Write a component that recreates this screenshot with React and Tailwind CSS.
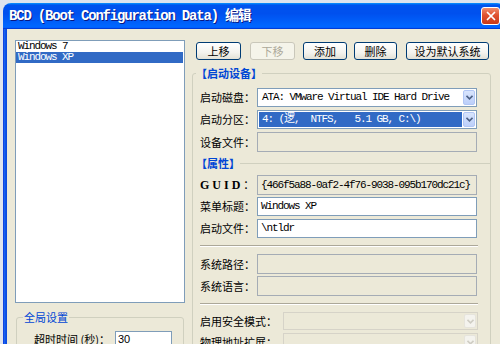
import { X } from "lucide-react";

const mono = { fontFamily: '"Liberation Mono", "Noto Sans CJK SC", monospace' };
const cjk = { fontFamily: 'Tahoma, "Noto Sans CJK SC", sans-serif' };

const XPButton = ({ label, w, disabled, className = "" }) => (
  <div
    className={`h-[18px] ${w} flex items-center justify-center rounded-[3px] border text-[11px] leading-none ${
      disabled
        ? "border-[#c9c7ba] text-[#aca899] bg-[#f5f4ea]"
        : "border-[#003c74] text-black bg-[linear-gradient(180deg,#ffffff,#f4f3ee_60%,#e3e1d6)]"
    } ${className}`}
    style={cjk}
  >
    {label}
  </div>
);

const Arrow = ({ disabled }) => (
  <div
    className={`w-[12px] h-full flex items-center justify-center rounded-[2px] ${
      disabled
        ? "bg-[#f4f3ee] border border-[#e6e4dc]"
        : "bg-[linear-gradient(180deg,#d9e5fd,#bccffa)] border border-[#b1c6f5]"
    }`}
  >
    <svg width="7" height="5" viewBox="0 0 7 5">
      <path d="M0.5 0.8 L3.5 3.8 L6.5 0.8" fill="none" stroke={disabled ? "#cfcdc4" : "#4d6185"} strokeWidth="1.6" />
    </svg>
  </div>
);

const Label = ({ children, w = "w-[57px]" }) => (
  <div className={`${w} shrink-0 text-[11px] text-black leading-none`} style={cjk}>
    {children}
  </div>
);

const Combo = ({ value, selected, h = "h-[19px]" }) => (
  <div className={`w-[220px] ${h} border border-[#7f9db9] bg-white flex items-stretch p-[1px] gap-[1px]`}>
    <div
      className={`flex-1 flex items-center pl-[3px] text-[11px] tracking-[-1.1px] whitespace-pre ${
        selected ? "bg-[#316ac5] text-white" : "text-black"
      }`}
      style={mono}
    >
      {value}
    </div>
    <Arrow />
  </div>
);

const Field = ({ value, disabled, h = "h-[19px]" }) => (
  <div
    className={`w-[220px] ${h} border flex items-center pl-[3px] text-[11px] tracking-[-1.1px] whitespace-pre text-black ${
      disabled ? "border-[#a5acb5] bg-[#ece9d8]" : "border-[#7f9db9] bg-white"
    }`}
    style={mono}
  >
    {value}
  </div>
);

const Separator = () => <div className="w-[278px] border-t border-[#aca899] border-b border-b-white" />;

export default function App() {
  return (
    <div className="w-[500px] h-[344px] overflow-hidden bg-[#dfe4ee] pl-[3px] pt-[3px]">
      <div className="w-[502px] h-[400px] flex flex-col">
        {/* Title bar */}
        <div className="h-[26px] shrink-0 rounded-tl-[8px] rounded-tr-[8px] flex items-center justify-between bg-[linear-gradient(180deg,#0997ff_0%,#0053ee_8%,#0050ee_40%,#0066ff_88%,#0066ff_93%,#005bff_95%,#003dd7_96%,#003dd7_100%)]">
          <div
            className="pl-[6px] text-white font-bold text-[14px] tracking-[-1.2px] [text-shadow:1px_1px_#0a1883]"
            style={mono}
          >
            BCD (Boot Configuration Data) 编辑
          </div>
          <div className="mr-[5px] w-[19px] h-[18px] rounded-[3px] border border-white bg-[linear-gradient(180deg,#f08c6c,#e0512f_45%,#c8391a)] flex items-center justify-center">
            <X size={14} strokeWidth={3} color="white" />
          </div>
        </div>

        <div className="flex flex-1">
          {/* left frame */}
          <div className="w-[4px] shrink-0 bg-[linear-gradient(90deg,#0831d9,#1a64f0,#0b50e6,#0a46dc)]" />
          <div className="flex-1 bg-[#ece9d8] flex items-start pl-[8px] pt-[11px]">
            {/* Left column */}
            <div className="w-[170px] flex flex-col shrink-0">
              <div className="h-[263px] border border-[#7f9db9] bg-white flex flex-col text-[11px] tracking-[-1.1px]" style={mono}>
                <div className="h-[11px] leading-[11px] pl-[2px] text-black">Windows 7</div>
                <div className="h-[11px] leading-[11px] pl-[2px] mr-[1px] bg-[#316ac5] text-white">Windows XP</div>
              </div>
              <div className="mt-[14px] ml-[1px] w-[168px] h-[60px] border border-[#d0d0bf] rounded-[3px]">
                <div
                  className="-mt-[7px] ml-[6px] w-fit px-[1px] h-[13px] leading-[13px] bg-[#ece9d8] text-[11px] text-[#0046d5]"
                  style={cjk}
                >
                  全局设置
                </div>
                <div className="mt-[7px] flex items-center pl-[17px]">
                  <div className="w-[81px] text-[11px] leading-none" style={cjk}>超时时间 (秒)：</div>
                  <div
                    className="w-[57px] h-[17px] border border-[#7f9db9] bg-white pl-[2px] text-[11px] flex items-center"
                    style={{ fontFamily: '"Liberation Sans", sans-serif' }}
                  >
                    30
                  </div>
                </div>
              </div>
            </div>

            {/* Right column */}
            <div className="ml-[7px] w-[299px] flex flex-col shrink-0">
              <div className="mt-[2px] pl-[4px] flex">
                <XPButton label="上移" w="w-[45px]" />
                <XPButton label="下移" w="w-[45px]" disabled className="ml-[9px]" />
                <XPButton label="添加" w="w-[44px]" className="ml-[8px]" />
                <XPButton label="删除" w="w-[43px]" className="ml-[7px]" />
                <XPButton label="设为默认系统" w="w-[83px]" className="ml-[9px]" />
              </div>

              <div className="mt-[13px] h-[300px] border border-[#d0d0bf] rounded-[3px]">
                <div
                  className="-mt-[7px] ml-[3px] w-fit h-[13px] leading-[13px] bg-[#ece9d8] text-[11px] font-bold text-[#0046d5]"
                  style={cjk}
                >
                  【启动设备】
                </div>
                <div className="px-[7px] flex flex-col">
                  <div className="mt-[8px] flex items-center">
                    <Label>启动磁盘：</Label>
                    <Combo value="ATA: VMware Virtual IDE Hard Drive" />
                  </div>
                  <div className="mt-[3px] flex items-center">
                    <Label>启动分区：</Label>
                    <Combo value="4: (逻,  NTFS,   5.1 GB, C:\)" selected />
                  </div>
                  <div className="mt-[3px] flex items-center">
                    <Label>设备文件：</Label>
                    <Field value="" disabled h="h-[20px]" />
                  </div>

                  <div className="mt-[5px] -ml-[4px] -mr-[7px] h-[13px] flex items-center">
                    <div className="text-[11px] font-bold text-[#0046d5] leading-none" style={cjk}>【属性】</div>
                    <div className="flex-1 border-t border-[#d0d0bf]" />
                  </div>

                  <div className="mt-[5px] flex items-center">
                    <Label>
                      <span
                        className="font-bold text-[12px] tracking-[3px]"
                        style={{ fontFamily: '"Liberation Serif", serif' }}
                      >
                        GUID
                      </span>
                      ：
                    </Label>
                    <Field value="{466f5a88-0af2-4f76-9038-095b170dc21c}" disabled h="h-[20px]" />
                  </div>
                  <div className="mt-[2px] flex items-center">
                    <Label>菜单标题：</Label>
                    <Field value="Windows XP" />
                  </div>
                  <div className="mt-[3px] flex items-center">
                    <Label>启动文件：</Label>
                    <Field value="\ntldr" />
                  </div>

                  <div className="mt-[7px]">
                    <Separator />
                  </div>

                  <div className="mt-[7px] flex items-center">
                    <Label>系统路径：</Label>
                    <Field value="" disabled h="h-[20px]" />
                  </div>
                  <div className="mt-[2px] flex items-center">
                    <Label>系统语言：</Label>
                    <Field value="" disabled h="h-[20px]" />
                  </div>

                  <div className="mt-[7px]">
                    <Separator />
                  </div>

                  <div className="mt-[7px] flex items-center">
                    <Label w="w-[83px]">启用安全模式：</Label>
                    <div className="w-[195px] h-[18px] border border-[#d6d3c8] bg-[#ece9d8] flex justify-end p-[1px]">
                      <Arrow disabled />
                    </div>
                  </div>
                  <div className="mt-[3px] flex items-center">
                    <Label w="w-[83px]">物理地址扩展：</Label>
                    <div className="w-[195px] h-[18px] border border-[#d6d3c8] bg-[#ece9d8] flex justify-end p-[1px]">
                      <Arrow disabled />
                    </div>
                  </div>
                </div>
              </div>
            </div>
          </div>
        </div>
      </div>
    </div>
  );
}
